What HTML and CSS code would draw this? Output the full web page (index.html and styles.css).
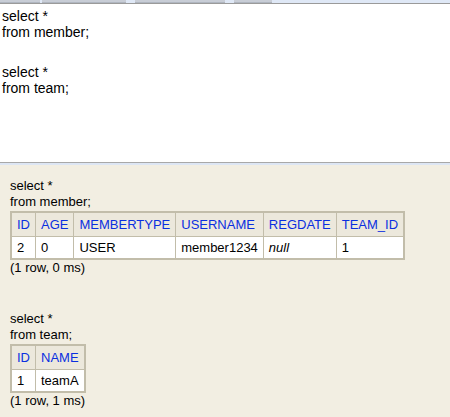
FILE: index.html
```html
<!DOCTYPE html>
<html>
<head>
<meta charset="utf-8">
<link rel="stylesheet" href="styles.css">
</head>
<body>
<div class="toolbar">
  <span class="btn b1"></span>
  <span class="btn b2"></span>
  <span class="btn b3"></span>
  <span class="btn b4"></span>
</div>
<div class="editor">
  <div>select *</div>
  <div>from member;</div>
  <div class="blank"></div>
  <div>select *</div>
  <div>from team;</div>
</div>
<div class="splitter"></div>
<div class="results">
  <div class="query">
    <div>select *</div>
    <div>from member;</div>
    <table class="rs">
      <tr><th>ID</th><th>AGE</th><th>MEMBERTYPE</th><th>USERNAME</th><th>REGDATE</th><th>TEAM_ID</th></tr>
      <tr><td>2</td><td>0</td><td>USER</td><td>member1234</td><td><i>null</i></td><td>1</td></tr>
    </table>
    <div>(1 row, 0 ms)</div>
  </div>
  <div class="query second">
    <div>select *</div>
    <div>from team;</div>
    <table class="rs">
      <tr><th>ID</th><th>NAME</th></tr>
      <tr><td>1</td><td>teamA</td></tr>
    </table>
    <div>(1 row, 1 ms)</div>
  </div>
</div>
</body>
</html>
```
FILE: styles.css
```css
html, body { margin: 0; padding: 0; }
body {
  width: 450px;
  height: 417px;
  overflow: hidden;
  font-family: "Liberation Sans", Arial, sans-serif;
  color: #000;
  background: #f2eee2;
}
.toolbar {
  height: 3px;
  background: #dfe8f6;
  border-bottom: 1px solid #9a9a9a;
  display: flex;
  overflow: hidden;
}
.btn {
  display: block;
  height: 2px;
  background: #c8cdd6;
  border-bottom: 1px solid #b0b6c0;
}
.b1 { width: 40px; }
.b2 { width: 84px; margin-left: 2px; }
.b3 { width: 90px; margin-left: 9px; }
.b4 { width: 38px; margin-left: 9px; }
.editor {
  background: #fff;
  height: 158px;
  padding: 4px 0 0 2px;
  box-sizing: border-box;
  font-size: 14px;
  line-height: 16px;
}
.editor .blank { height: 24px; }
.splitter {
  height: 1px;
  background: #a8a8a8;
  border-bottom: 2px solid #dde6f4;
}
.results {
  padding: 13px 0 0 10px;
  font-size: 13px;
  line-height: 16px;
}
.second { margin-top: 35px; }
.rs {
  border-collapse: collapse;
  border: 2px solid #c2bdaa;
  background: #fff;
  margin-top: 1px;
}
.rs th, .rs td {
  border: 1px solid #c2bdaa;
  padding: 3px 5px 2px 5px;
  text-align: left;
  font-weight: normal;
  line-height: 16px;
}
.rs th {
  background: #ece8dc;
  color: #0a2fe0;
  padding-top: 4px;
  padding-bottom: 3px;
}
```
